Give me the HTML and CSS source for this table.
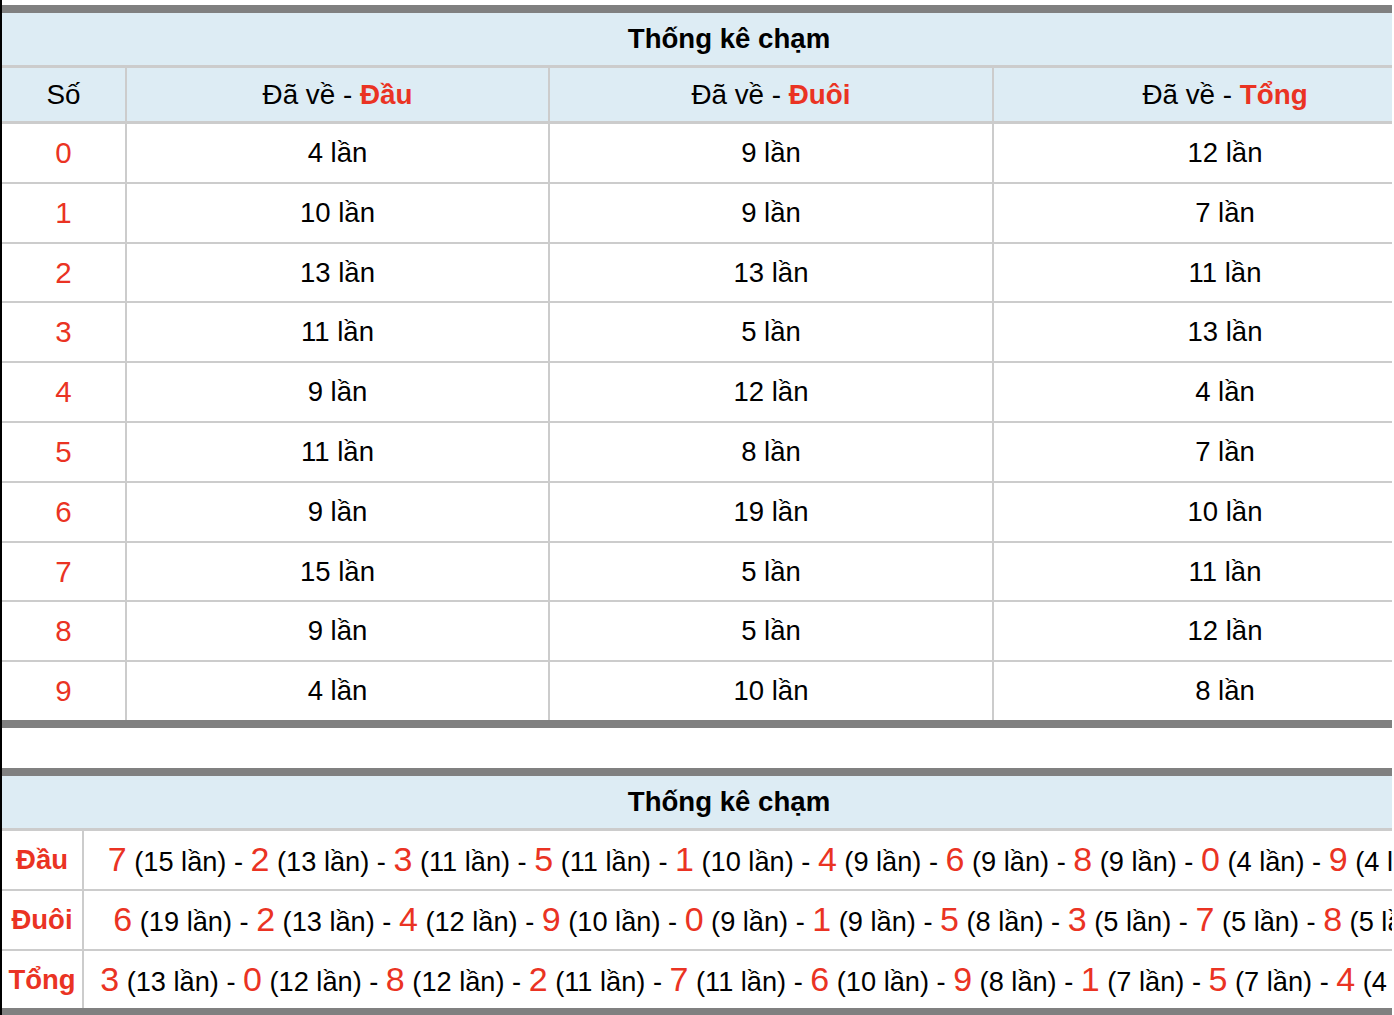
FILE: index.html
```html
<!DOCTYPE html>
<html lang="vi">
<head>
<meta charset="utf-8">
<title>Thống kê chạm</title>
<link rel="stylesheet" href="styles.css">
</head>
<body>
<div class="page">
  <div class="scroll">
    <table class="t1">
      <thead>
        <tr><th class="title" colspan="4">Thống kê chạm</th></tr>
        <tr class="head">
          <th class="c1">Số</th>
          <th class="c2">Đã về - <b class="hl">Đầu</b></th>
          <th class="c3">Đã về - <b class="hl">Đuôi</b></th>
          <th class="c4">Đã về - <b class="hl">Tổng</b></th>
        </tr>
      </thead>
      <tbody>
        <tr><td class="num">0</td><td>4 lần</td><td>9 lần</td><td>12 lần</td></tr>
        <tr><td class="num">1</td><td>10 lần</td><td>9 lần</td><td>7 lần</td></tr>
        <tr><td class="num">2</td><td>13 lần</td><td>13 lần</td><td>11 lần</td></tr>
        <tr><td class="num">3</td><td>11 lần</td><td>5 lần</td><td>13 lần</td></tr>
        <tr><td class="num">4</td><td>9 lần</td><td>12 lần</td><td>4 lần</td></tr>
        <tr><td class="num">5</td><td>11 lần</td><td>8 lần</td><td>7 lần</td></tr>
        <tr><td class="num">6</td><td>9 lần</td><td>19 lần</td><td>10 lần</td></tr>
        <tr><td class="num">7</td><td>15 lần</td><td>5 lần</td><td>11 lần</td></tr>
        <tr><td class="num">8</td><td>9 lần</td><td>5 lần</td><td>12 lần</td></tr>
        <tr><td class="num">9</td><td>4 lần</td><td>10 lần</td><td>8 lần</td></tr>
      </tbody>
    </table>
  </div>

  <div class="scroll gap">
    <table class="t2">
      <thead>
        <tr><th class="title" colspan="2">Thống kê chạm</th></tr>
      </thead>
      <tbody>
        <tr>
          <td class="lbl">Đầu</td>
          <td class="list"><span class="d">7</span> (15 lần) - <span class="d">2</span> (13 lần) - <span class="d">3</span> (11 lần) - <span class="d">5</span> (11 lần) - <span class="d">1</span> (10 lần) - <span class="d">4</span> (9 lần) - <span class="d">6</span> (9 lần) - <span class="d">8</span> (9 lần) - <span class="d">0</span> (4 lần) - <span class="d">9</span> (4 lần)</td>
        </tr>
        <tr>
          <td class="lbl">Đuôi</td>
          <td class="list"><span class="d">6</span> (19 lần) - <span class="d">2</span> (13 lần) - <span class="d">4</span> (12 lần) - <span class="d">9</span> (10 lần) - <span class="d">0</span> (9 lần) - <span class="d">1</span> (9 lần) - <span class="d">5</span> (8 lần) - <span class="d">3</span> (5 lần) - <span class="d">7</span> (5 lần) - <span class="d">8</span> (5 lần)</td>
        </tr>
        <tr>
          <td class="lbl">Tổng</td>
          <td class="list"><span class="d">3</span> (13 lần) - <span class="d">0</span> (12 lần) - <span class="d">8</span> (12 lần) - <span class="d">2</span> (11 lần) - <span class="d">7</span> (11 lần) - <span class="d">6</span> (10 lần) - <span class="d">9</span> (8 lần) - <span class="d">1</span> (7 lần) - <span class="d">5</span> (7 lần) - <span class="d">4</span> (4 lần)</td>
        </tr>
      </tbody>
    </table>
  </div>
</div>
</body>
</html>
```

FILE: styles.css
```css
html, body {
  margin: 0;
  padding: 0;
  background: #fff;
}

body {
  font-family: "Liberation Sans", Arial, Helvetica, sans-serif;
  color: #000;
}

.page {
  width: 1390px;
  height: 1010px;
  border-left: 2px solid #000;
  padding-top: 5px;
  display: flex;
  flex-direction: column;
  overflow: hidden;
}

.scroll {
  overflow: hidden;
  flex: none;
}

.gap {
  margin-top: 40px;
}

table {
  border-collapse: separate;
  border-spacing: 0;
  border-top: 8px solid #808080;
  border-bottom: 8px solid #808080;
}

th, td {
  box-sizing: border-box;
  padding: 0;
  text-align: center;
  vertical-align: middle;
  line-height: 1.15;
  white-space: nowrap;
}

.title {
  background: #ddecf4;
  height: 55px;
  border-bottom: 3px solid #cccccc;
  font-size: 27.6px;
  font-weight: bold;
}

/* ---------- table 1 ---------- */
.t1 {
  width: 1454px;
}

.t1 .head th {
  background: #ddecf4;
  height: 56px;
  border-bottom: 3px solid #cccccc;
  font-size: 27.8px;
  font-weight: normal;
}

.t1 .c1 { width: 125px; }
.t1 .c2 { width: 423px; }
.t1 .c3 { width: 444px; }
.t1 .c4 { width: 462px; }

.t1 th.c1, .t1 th.c2, .t1 th.c3,
.t1 td:not(:last-child) {
  border-right: 2px solid #cccccc;
}

.t1 td {
  height: 59.8px;
  border-bottom: 2px solid #cccccc;
  font-size: 27.5px;
}

.t1 tbody tr:last-child td {
  height: 57.8px;
  border-bottom: 0;
}

.hl {
  color: #ea3323;
  font-weight: bold;
}

.t1 td.num {
  color: #ea3323;
  font-size: 29.5px;
}

/* ---------- table 2 ---------- */
.t2 {
  width: 1454px;
}

.t2 td {
  height: 60px;
  border-bottom: 2px solid #cccccc;
}

.t2 tbody tr:last-child td {
  height: 57px;
  border-bottom: 0;
}

.t2 .lbl {
  width: 82px;
  border-right: 2px solid #cccccc;
  color: #ea3323;
  font-weight: bold;
  font-size: 27.5px;
}

.t2 .list {
  width: 1372px;
  font-size: 27.2px;
}

.t2 .d {
  color: #ea3323;
  font-size: 34px;
}
```
